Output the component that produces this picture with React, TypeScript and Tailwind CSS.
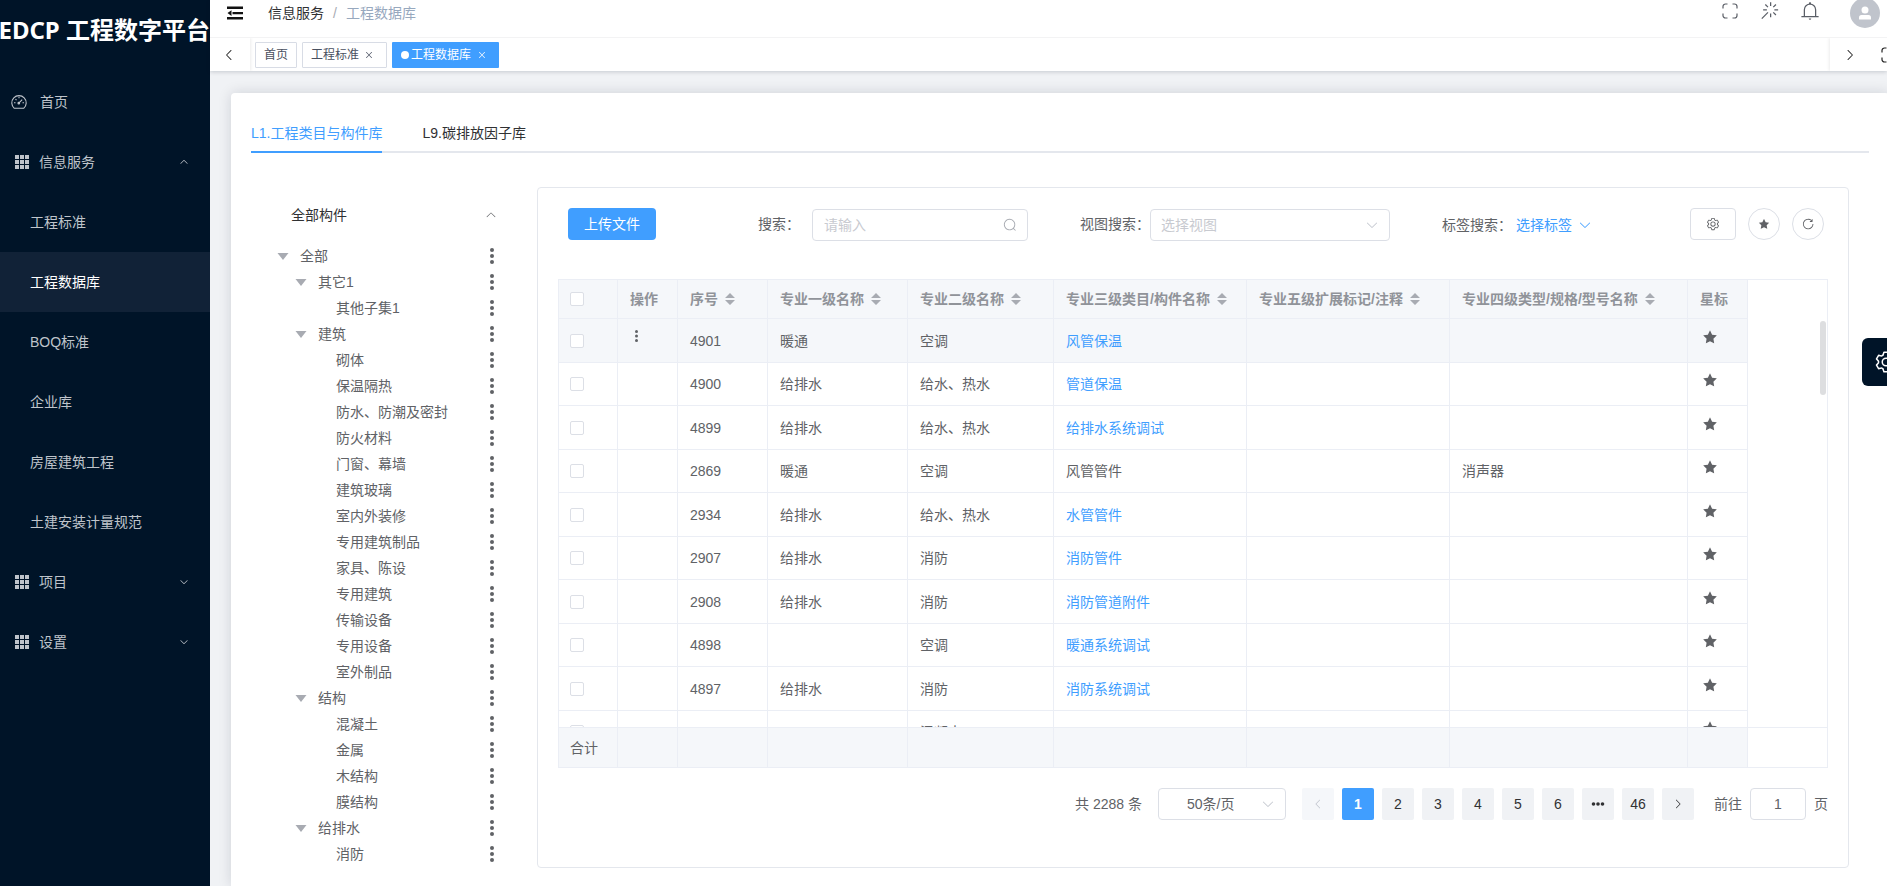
import React from "react";

const PATHS = {
  arrowDown:
    "M831.872 340.864 512 652.672 192.128 340.864a30.592 30.592 0 0 0-42.752 0 29.12 29.12 0 0 0 0 41.6L489.664 714.24a32 32 0 0 0 44.672 0l340.288-331.712a29.12 29.12 0 0 0 0-41.728 30.592 30.592 0 0 0-42.752 0z",
  setting:
    "M600.704 64a32 32 0 0 1 30.464 22.208l35.2 109.376c14.784 7.232 28.928 15.36 42.432 24.512l112.384-24.192a32 32 0 0 1 34.432 15.36L944.32 364.8a32 32 0 0 1-4.032 37.504l-77.12 85.12a357.12 357.12 0 0 1 0 49.024l77.12 85.248a32 32 0 0 1 4.032 37.504l-88.704 153.6a32 32 0 0 1-34.432 15.296L708.8 803.904c-13.44 9.088-27.648 17.28-42.368 24.512l-35.264 109.376A32 32 0 0 1 600.704 960H423.296a32 32 0 0 1-30.464-22.208L357.696 828.48a351.616 351.616 0 0 1-42.56-24.64l-112.32 24.256a32 32 0 0 1-34.432-15.36L79.68 659.2a32 32 0 0 1 4.032-37.504l77.12-85.248a357.12 357.12 0 0 1 0-48.896l-77.12-85.248A32 32 0 0 1 79.68 364.8l88.704-153.6a32 32 0 0 1 34.432-15.296l112.32 24.256c13.568-9.152 27.776-17.408 42.56-24.64l35.2-109.312A32 32 0 0 1 423.232 64H600.64zm-23.424 64H446.72l-36.352 113.088-24.512 11.968a294.113 294.113 0 0 0-34.816 20.096l-22.656 15.36-116.224-25.088-65.28 113.152 79.68 88.192-1.92 27.136a293.12 293.12 0 0 0 0 40.192l1.92 27.136-79.808 88.192 65.344 113.152 116.224-25.024 22.656 15.296a294.113 294.113 0 0 0 34.816 20.096l24.512 11.968L446.72 896h130.688l36.48-113.152 24.448-11.904a288.282 288.282 0 0 0 34.752-20.096l22.592-15.296 116.288 25.024 65.28-113.152-79.744-88.192 1.92-27.136a293.12 293.12 0 0 0 0-40.256l-1.92-27.136 79.808-88.128-65.344-113.152-116.288 24.96-22.592-15.232a287.616 287.616 0 0 0-34.752-20.096l-24.448-11.904L577.344 128zM512 320a192 192 0 1 1 0 384 192 192 0 0 1 0-384zm0 64a128 128 0 1 0 0 256 128 128 0 0 0 0-256z",
  star: "M283.84 867.84 512 747.776l228.16 119.936a6.4 6.4 0 0 0 9.28-6.72l-43.52-254.08 184.512-179.904a6.4 6.4 0 0 0-3.52-10.88l-255.104-37.12L517.76 147.904a6.4 6.4 0 0 0-11.52 0L392.192 379.072l-255.104 37.12a6.4 6.4 0 0 0-3.52 10.88L318.08 606.976l-43.584 254.08a6.4 6.4 0 0 0 9.28 6.72z",
  refresh:
    "M784.512 230.272v-50.56a32 32 0 1 1 64 0v149.056a32 32 0 0 1-32 32H667.52a32 32 0 1 1 0-64h92.992A320 320 0 1 0 524.8 833.152a320 320 0 0 0 320-320h64a384 384 0 0 1-384 384 384 384 0 0 1-384-384 384 384 0 0 1 643.712-282.88z",
  search:
    "m795.904 750.72 124.992 124.928a32 32 0 0 1-45.248 45.248L750.656 795.904a416 416 0 1 1 45.248-45.248zM480 832a352 352 0 1 0 0-704 352 352 0 0 0 0 704z",
  magic:
    "M512 64h64v192h-64V64zm0 576h64v192h-64V640zM160 480v-64h192v64H160zm576 0v-64h192v64H736zM249.856 199.04l45.248-45.184L430.848 289.6 385.6 334.848 249.856 199.104zM657.152 606.4l45.248-45.248 135.744 135.744-45.248 45.248L657.152 606.4zM114.048 923.2 68.8 877.952l316.8-316.8 45.248 45.248-316.8 316.8zM702.4 334.848 657.152 289.6l135.744-135.744 45.248 45.248L702.4 334.848z",
  bell: "M512 64a64 64 0 0 1 64 64v64H448v-64a64 64 0 0 1 64-64zM256 768h512V448a256 256 0 1 0-512 0v320zm256-640a320 320 0 0 1 320 320v384H192V448a320 320 0 0 1 320-320zM96 768h832q32 0 32 32t-32 32H96q-32 0-32-32t32-32zm352 128h128a64 64 0 0 1-128 0z",
  user: "M288 320a224 224 0 1 0 448 0 224 224 0 1 0-448 0zm544 608H160a32 32 0 0 1-32-32v-96a160 160 0 0 1 160-160h448a160 160 0 0 1 160 160v96a32 32 0 0 1-32 32z",
  close:
    "M764.288 214.592 512 466.88 259.712 214.592a31.936 31.936 0 0 0-45.12 45.12L466.752 512 214.528 764.224a31.936 31.936 0 1 0 45.12 45.184L512 557.184l252.288 252.288a31.936 31.936 0 0 0 45.12-45.12L557.12 512.064l252.288-252.352a31.936 31.936 0 1 0-45.12-45.184z",
};

function Icon({ name, className }: { name: keyof typeof PATHS; className: string }) {
  return (
    <svg viewBox="0 0 1024 1024" fill="currentColor" className={`shrink-0 ${className}`} aria-hidden="true">
      <path d={PATHS[name]} />
    </svg>
  );
}

function FullscreenIcon({ className }: { className: string }) {
  return (
    <svg viewBox="0 0 16 16" fill="none" stroke="currentColor" strokeWidth="1.2" className={`shrink-0 ${className}`} aria-hidden="true">
      <path d="M1 5.500V3.500A2.500 2.500 0 0 1 3.500 1H5.500M10.500 1h2A2.500 2.500 0 0 1 15 3.500v2M15 10.500v2a2.500 2.500 0 0 1-2.500 2.500h-2M5.500 15h-2A2.500 2.500 0 0 1 1 12.500v-2" />
    </svg>
  );
}

function DashboardIcon() {
  return (
    <svg viewBox="0 0 16 16" fill="none" stroke="currentColor" strokeWidth="1.1" className="h-4 w-4 shrink-0" aria-hidden="true">
      <path d="M3.300 14.300A7.200 7.200 0 1 1 12.700 14.300Z" strokeLinejoin="round" />
      <path d="M8 2.800v1.500M3 8.700h1.500M11.500 8.700H13M4.500 5.200l1 1M7.800 9.200l3.400-3.600" />
      <circle cx="7.800" cy="9.200" r="0.800" fill="currentColor" />
    </svg>
  );
}

function GridIcon() {
  return (
    <svg viewBox="0 0 14 14" fill="currentColor" className="h-3.5 w-3.5 shrink-0" aria-hidden="true">
      {[0, 5, 10].map((y) => [0, 5, 10].map((x) => <rect key={`${x}-${y}`} x={x} y={y} width="4" height="4" />))}
    </svg>
  );
}

function DotsIcon({ className }: { className: string }) {
  return (
    <svg viewBox="0 0 4 16" fill="currentColor" className={`shrink-0 ${className}`} aria-hidden="true">
      <circle cx="2" cy="2" r="2" />
      <circle cx="2" cy="8" r="2" />
      <circle cx="2" cy="14" r="2" />
    </svg>
  );
}

function SortIcon() {
  return (
    <svg viewBox="0 0 10 12" fill="#a8abb2" className="h-3 w-2.5 shrink-0" aria-hidden="true">
      <path d="M5 0 10 5H0ZM5 12 0 7h10Z" />
    </svg>
  );
}

const SUB_MENU = ["工程标准", "工程数据库", "BOQ标准", "企业库", "房屋建筑工程", "土建安装计量规范"];

function MenuGroup({ label, open }: { label: string; open?: boolean }) {
  return (
    <button type="button" aria-expanded={!!open} className="flex h-[60px] w-full items-center pl-[15px] pr-[21px]">
      <GridIcon />
      <span className="ml-2.5">{label}</span>
      <Icon name="arrowDown" className={`ml-auto h-2.5 w-2.5 ${open ? "rotate-180" : ""}`} />
    </button>
  );
}

function Sidebar() {
  return (
    <aside className="w-[210px] shrink-0 bg-[#001428] text-sm text-[#bfc4cb]">
      <div className="flex h-[72px] justify-end overflow-hidden pt-3">
        <h1 className="shrink-0 whitespace-nowrap font-['Noto_Sans','Noto_Sans_CJK_SC',sans-serif] text-2xl font-bold leading-9 text-white">
          EDCP 工程数字平台
        </h1>
      </div>
      <nav>
        <a href="#home" className="flex h-[60px] items-center gap-[13px] pl-[11px]">
          <DashboardIcon />
          首页
        </a>
        <MenuGroup label="信息服务" open />
        {SUB_MENU.map((label) => (
          <a
            key={label}
            href="#library"
            className={`flex h-[60px] items-center pl-[30px] ${label === "工程数据库" ? "bg-[#112237] text-white" : ""}`}
          >
            {label}
          </a>
        ))}
        <MenuGroup label="项目" />
        <MenuGroup label="设置" />
      </nav>
    </aside>
  );
}

function TopBar() {
  return (
    <header className="relative z-10 bg-white shadow-[0_1px_4px_rgba(0,21,41,0.18)]">
      <div className="-mt-3 flex h-[50px] items-center border-b border-[#f3f3f4] pl-[17px] pr-[7px]">
        <button type="button" aria-label="折叠菜单" className="text-[#111]">
          <svg viewBox="0 0 16 14" fill="currentColor" className="h-3.5 w-4">
            <path d="M0 0.500h16v2.500H0ZM5.500 6h10.500v2.200H5.500ZM0 11h16v2.500H0ZM0.500 7.100 4.500 4.300v5.600Z" />
          </svg>
        </button>
        <nav aria-label="面包屑" className="ml-[25px] flex items-center gap-[9px] text-sm">
          <a href="#info" className="text-[#303133]">信息服务</a>
          <span className="text-[#a8abb2]">/</span>
          <span className="text-[#97a8be]">工程数据库</span>
        </nav>
        <div className="ml-auto flex items-center text-[#5a5e66]">
          <button type="button" aria-label="全屏" className="pb-1"><FullscreenIcon className="h-4 w-4" /></button>
          <button type="button" aria-label="主题" className="ml-[22px] pb-1"><Icon name="magic" className="h-5 w-5" /></button>
          <button type="button" aria-label="通知" className="ml-5 pb-1"><Icon name="bell" className="h-5 w-5" /></button>
          <button type="button" aria-label="用户" className="ml-[30px] flex h-[30px] w-[30px] items-center justify-center rounded-full bg-[#c0c4cc] text-white">
            <Icon name="user" className="h-4 w-4" />
          </button>
        </div>
      </div>
      <div className="flex h-[33px] items-center overflow-hidden">
        <button type="button" aria-label="向左" className="flex h-full w-10 shrink-0 items-center justify-center pr-0.5 shadow-[1px_0_3px_rgba(0,0,0,0.08)]">
          <Icon name="arrowDown" className="h-3.5 w-3.5 rotate-90 text-[#222]" />
        </button>
        <div className="flex items-center gap-[5px] pl-[5px] pt-px text-xs text-[#495060]">
          <a href="#home" className="flex h-[26px] items-center rounded-[1px] border border-[#d8dce5] px-2">首页</a>
          <div className="flex h-[26px] items-center rounded-[1px] border border-[#d8dce5] pl-2 pr-3">
            <a href="#standard">工程标准</a>
            <button type="button" aria-label="关闭工程标准" className="ml-[5px]"><Icon name="close" className="h-2.5 w-2.5" /></button>
          </div>
          <div className="flex h-[26px] items-center rounded-[1px] bg-[#409eff] pl-[9px] pr-3 text-white">
            <span className="mr-0.5 h-2 w-2 rounded-full bg-white" />
            <a href="#library">工程数据库</a>
            <button type="button" aria-label="关闭工程数据库" className="ml-1.5"><Icon name="close" className="h-2.5 w-2.5" /></button>
          </div>
        </div>
        <div className="ml-auto flex h-full w-[57px] shrink-0 items-center overflow-hidden pl-[13px] text-[#222] shadow-[-1px_0_3px_rgba(0,0,0,0.08)]">
          <button type="button" aria-label="向右" className="shrink-0"><Icon name="arrowDown" className="h-3.5 w-3.5 -rotate-90" /></button>
          <button type="button" aria-label="内容全屏" className="ml-6 shrink-0"><FullscreenIcon className="h-4 w-4" /></button>
        </div>
      </div>
    </header>
  );
}

const TREE: { label: string; level: 0 | 1 | 2 }[] = [
  { label: "全部", level: 0 },
  { label: "其它1", level: 1 },
  { label: "其他子集1", level: 2 },
  { label: "建筑", level: 1 },
  { label: "砌体", level: 2 },
  { label: "保温隔热", level: 2 },
  { label: "防水、防潮及密封", level: 2 },
  { label: "防火材料", level: 2 },
  { label: "门窗、幕墙", level: 2 },
  { label: "建筑玻璃", level: 2 },
  { label: "室内外装修", level: 2 },
  { label: "专用建筑制品", level: 2 },
  { label: "家具、陈设", level: 2 },
  { label: "专用建筑", level: 2 },
  { label: "传输设备", level: 2 },
  { label: "专用设备", level: 2 },
  { label: "室外制品", level: 2 },
  { label: "结构", level: 1 },
  { label: "混凝土", level: 2 },
  { label: "金属", level: 2 },
  { label: "木结构", level: 2 },
  { label: "膜结构", level: 2 },
  { label: "给排水", level: 1 },
  { label: "消防", level: 2 },
];

const INDENT = ["pl-[26px]", "pl-11", "pl-[62px]"];

function TreePanel() {
  return (
    <section className="w-[286px] shrink-0">
      <button type="button" aria-expanded="true" className="flex h-14 w-full items-center justify-between px-10 text-[#303133]">
        全部构件
        <Icon name="arrowDown" className="h-3 w-3 rotate-180 text-[#606266]" />
      </button>
      <ul>
        {TREE.map((node) => (
          <li key={node.label} className={`flex h-[26px] items-center pr-[43px] ${INDENT[node.level]}`}>
            <span className="flex w-[23px] items-center">
              {node.level < 2 && (
                <svg viewBox="0 0 12 7" fill="#a8abb2" className="h-[7px] w-3" aria-hidden="true">
                  <path d="M0.500 0h11L6 7Z" />
                </svg>
              )}
            </span>
            {node.label}
            <button type="button" aria-label={`${node.label}操作`} className="ml-auto">
              <DotsIcon className="h-4 w-1" />
            </button>
          </li>
        ))}
      </ul>
    </section>
  );
}

const COLUMNS = [
  { title: "", width: "w-[59px]" },
  { title: "操作", width: "w-[60px]" },
  { title: "序号", width: "w-[90px]", sort: true },
  { title: "专业一级名称", width: "w-[140px]", sort: true },
  { title: "专业二级名称", width: "w-[146px]", sort: true },
  { title: "专业三级类目/构件名称", width: "w-[193px]", sort: true },
  { title: "专业五级扩展标记/注释", width: "w-[203px]", sort: true },
  { title: "专业四级类型/规格/型号名称", width: "w-[238px]", sort: true },
  { title: "星标", width: "w-[60px]" },
];

const ROWS = [
  { id: "4901", first: "暖通", second: "空调", third: "风管保温", link: true, fourth: "" },
  { id: "4900", first: "给排水", second: "给水、热水", third: "管道保温", link: true, fourth: "" },
  { id: "4899", first: "给排水", second: "给水、热水", third: "给排水系统调试", link: true, fourth: "" },
  { id: "2869", first: "暖通", second: "空调", third: "风管管件", link: false, fourth: "消声器" },
  { id: "2934", first: "给排水", second: "给水、热水", third: "水管管件", link: true, fourth: "" },
  { id: "2907", first: "给排水", second: "消防", third: "消防管件", link: true, fourth: "" },
  { id: "2908", first: "给排水", second: "消防", third: "消防管道附件", link: true, fourth: "" },
  { id: "4898", first: "", second: "空调", third: "暖通系统调试", link: true, fourth: "" },
  { id: "4897", first: "给排水", second: "消防", third: "消防系统调试", link: true, fourth: "" },
  { id: "", first: "", second: "混凝土", third: "", link: false, fourth: "" },
];

const CELL = "border-b border-r border-[#ebeef5] px-3 py-0";
const TABLE = "w-[1189px] table-fixed border-separate border-spacing-0 text-left";

function Columns() {
  return (
    <colgroup>
      {COLUMNS.map((c) => (
        <col key={c.title} className={c.width} />
      ))}
    </colgroup>
  );
}

function CheckBox({ label }: { label: string }) {
  return (
    <input
      type="checkbox"
      aria-label={label}
      className="block h-3.5 w-3.5 appearance-none rounded-[2px] border border-[#dcdfe6] bg-white"
    />
  );
}

function DataTable() {
  return (
    <div className="relative border border-[#ebeef5]">
      <div className="h-[447px] overflow-hidden">
        <table className={TABLE}>
          <Columns />
          <thead className="bg-[#f5f7fa] text-[#909399]">
            <tr className="h-[39px]">
              {COLUMNS.map((c, i) => (
                <th key={c.title} className={`${CELL} font-bold first:pl-[11px]`}>
                  {i === 0 ? (
                    <CheckBox label="全选" />
                  ) : (
                    <span className="flex items-center gap-[7px] whitespace-nowrap">
                      {c.title}
                      {c.sort && <SortIcon />}
                    </span>
                  )}
                </th>
              ))}
            </tr>
          </thead>
          <tbody>
            {ROWS.map((r, i) => (
              <tr key={r.id} className={`odd:h-11 even:h-[43px] ${i === 0 ? "bg-[#f5f7fa]" : ""}`}>
                <td className={`${CELL} first:pl-[11px]`}><CheckBox label={`选择 ${r.id}`} /></td>
                <td className={CELL}>
                  {i === 0 && (
                    <button type="button" aria-label="行操作" className="block px-[5px] pb-2.5">
                      <DotsIcon className="h-3 w-[3px]" />
                    </button>
                  )}
                </td>
                <td className={CELL}>{r.id}</td>
                <td className={CELL}>{r.first}</td>
                <td className={CELL}>{r.second}</td>
                <td className={CELL}>
                  {r.link ? <a href="#detail" className="text-[#409eff]">{r.third}</a> : r.third}
                </td>
                <td className={CELL} />
                <td className={CELL}>{r.fourth}</td>
                <td className={CELL}>
                  <button type="button" aria-label="星标" className="block px-px pb-2">
                    <Icon name="star" className="h-[18px] w-[18px]" />
                  </button>
                </td>
              </tr>
            ))}
          </tbody>
        </table>
      </div>
      <div className="border-t border-[#ebeef5]">
        <table className={TABLE}>
          <Columns />
          <tbody className="bg-[#f5f7fa]">
            <tr className="h-[39px]">
              {COLUMNS.map((c, i) => (
                <td key={c.title} className="border-r border-[#ebeef5] px-3 py-0 first:pl-[11px]">{i === 0 ? "合计" : ""}</td>
              ))}
            </tr>
          </tbody>
        </table>
      </div>
      <div className="absolute right-px top-[41px] h-[74px] w-1.5 rounded-full bg-[#dddee0]" />
    </div>
  );
}

const PAGE = "flex h-8 w-8 items-center justify-center rounded-[2px]";

function Pagination() {
  return (
    <nav aria-label="分页" className="mt-5 flex h-8 items-center justify-end">
      <span>共 2288 条</span>
      <div className="relative ml-4">
        <select aria-label="每页条数" className="h-8 w-32 appearance-none rounded border border-[#dcdfe6] bg-white pl-7 pr-8">
          <option>50条/页</option>
        </select>
        <Icon name="arrowDown" className="pointer-events-none absolute right-[11px] top-[9px] h-3.5 w-3.5 text-[#c0c4cc]" />
      </div>
      <div className="ml-4 flex gap-2 text-[#303133]">
        <button type="button" disabled aria-label="上一页" className={`${PAGE} bg-[#f5f7fa] text-[#c0c4cc]`}>
          <Icon name="arrowDown" className="h-3 w-3 rotate-90" />
        </button>
        <button type="button" aria-current="page" className={`${PAGE} bg-[#409eff] font-bold text-white`}>1</button>
        {["2", "3", "4", "5", "6"].map((n) => (
          <button key={n} type="button" className={`${PAGE} bg-[#f0f2f5]`}>{n}</button>
        ))}
        <button type="button" aria-label="向后 5 页" className={`${PAGE} bg-[#f0f2f5]`}>
          <svg viewBox="0 0 14 4" fill="currentColor" className="h-1 w-3.5" aria-hidden="true">
            <circle cx="2.500" cy="2" r="1.800" />
            <circle cx="7" cy="2" r="1.800" />
            <circle cx="11.500" cy="2" r="1.800" />
          </svg>
        </button>
        <button type="button" className={`${PAGE} bg-[#f0f2f5]`}>46</button>
        <button type="button" aria-label="下一页" className={`${PAGE} bg-[#f0f2f5]`}>
          <Icon name="arrowDown" className="h-3 w-3 -rotate-90" />
        </button>
      </div>
      <label htmlFor="jump" className="ml-5">前往</label>
      <input id="jump" defaultValue="1" className="mx-2 h-8 w-14 rounded border border-[#dcdfe6] text-center" />
      <span>页</span>
    </nav>
  );
}

function Toolbar() {
  return (
    <div className="mb-[39px] flex h-8 items-center whitespace-nowrap pl-2.5 pr-1">
      <button type="button" className="h-8 w-[88px] rounded bg-[#409eff] text-white">上传文件</button>
      <label htmlFor="keyword" className="ml-[102px]">搜索：</label>
      <div className="relative ml-3 mt-0.5">
        <input
          id="keyword"
          placeholder="请输入"
          className="block h-8 w-[216px] rounded border border-[#dcdfe6] pl-[11px] pr-8 placeholder:text-[#c8cad0]"
        />
        <Icon name="search" className="pointer-events-none absolute right-[11px] top-[9px] h-3.5 w-3.5 text-[#a8abb2]" />
      </div>
      <label htmlFor="view" className="ml-[52px]">视图搜索：</label>
      <div className="relative mt-0.5">
        <select id="view" className="block h-8 w-60 appearance-none rounded border border-[#dcdfe6] bg-white pl-2.5 text-[#c8cad0]">
          <option>选择视图</option>
        </select>
        <Icon name="arrowDown" className="pointer-events-none absolute right-[11px] top-[9px] h-3.5 w-3.5 text-[#c0c4cc]" />
      </div>
      <div className="ml-[52px] flex items-center gap-1 pt-0.5">
        <span>标签搜索：</span>
        <button type="button" className="flex items-center gap-1.5 text-[#409eff]">
          选择标签
          <Icon name="arrowDown" className="h-3.5 w-3.5" />
        </button>
      </div>
      <div className="ml-auto flex gap-3">
        <button type="button" aria-label="列设置" className="flex h-8 w-[46px] items-center justify-center rounded border border-[#dcdfe6]">
          <Icon name="setting" className="h-3.5 w-3.5" />
        </button>
        <button type="button" aria-label="收藏" className="flex h-8 w-8 items-center justify-center rounded-full border border-[#dcdfe6]">
          <Icon name="star" className="h-3.5 w-3.5" />
        </button>
        <button type="button" aria-label="刷新" className="flex h-8 w-8 items-center justify-center rounded-full border border-[#dcdfe6]">
          <Icon name="refresh" className="h-3.5 w-3.5" />
        </button>
      </div>
    </div>
  );
}

export default function App() {
  return (
    <div className="flex min-h-screen overflow-hidden bg-[#f0f2f5] font-['Liberation_Sans','Noto_Sans_CJK_SC',sans-serif] text-sm text-[#606266]">
      <Sidebar />
      <div className="flex min-w-0 flex-1 flex-col">
        <TopBar />
        <main className="-mr-0.5 ml-[21px] mt-[22px] flex-1 rounded-t bg-white px-5 pb-[18px] pt-5 shadow-[0_0_14px_rgba(0,21,41,0.14)]">
          <div role="tablist" className="flex h-10 gap-10 border-b-2 border-[#e4e7ed] text-[#303133]">
            <button type="button" role="tab" aria-selected="true" className="-mb-0.5 border-b-2 border-[#409eff] pt-0.5 text-[#409eff]">
              L1.工程类目与构件库
            </button>
            <button type="button" role="tab" aria-selected="false" className="pt-0.5">L9.碳排放因子库</button>
          </div>
          <div className="mt-[34px] flex items-start">
            <TreePanel />
            <section className="mr-5 min-w-0 flex-1 rounded border border-[#e4e7ed] px-5 pb-[47px] pt-5">
              <Toolbar />
              <DataTable />
              <Pagination />
            </section>
          </div>
        </main>
      </div>
      <button
        type="button"
        aria-label="系统设置"
        className="fixed right-0 top-[338px] flex h-12 w-[25px] items-center overflow-hidden rounded-l-md bg-[#001428] pl-3 text-white"
      >
        <Icon name="setting" className="h-6 w-6" />
      </button>
    </div>
  );
}
